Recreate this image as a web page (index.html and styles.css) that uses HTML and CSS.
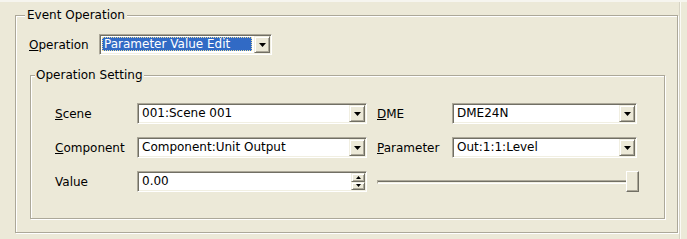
FILE: index.html
```html
<!DOCTYPE html>
<html lang="en">
<head>
    <meta charset="UTF-8">
    <title>Event Operation</title>
    <link rel="stylesheet" href="styles.css">
</head>
<body>

<div class="page">
    <div class="group outer">
        <div class="caption">Event Operation</div>

        <div class="op-row">
            <label class="op-label"><u>O</u>peration</label>
            <div class="combo op-combo">
                <span class="value"><span class="selected">Parameter Value Edit</span></span>
                <span class="drop"><svg width="7" height="4"><path d="M0 0h7L3.5 4z"/></svg></span>
            </div>
        </div>

        <div class="group inner">
            <div class="caption">Operation Setting</div>

            <div class="settings">
                <label><u>S</u>cene</label>
                <div class="combo wide">
                    <span class="value">001:Scene 001</span>
                    <span class="drop"><svg width="7" height="4"><path d="M0 0h7L3.5 4z"/></svg></span>
                </div>
                <label><u>D</u>ME</label>
                <div class="combo narrow">
                    <span class="value">DME24N</span>
                    <span class="drop"><svg width="7" height="4"><path d="M0 0h7L3.5 4z"/></svg></span>
                </div>

                <label><u>C</u>omponent</label>
                <div class="combo wide">
                    <span class="value">Component:Unit Output</span>
                    <span class="drop"><svg width="7" height="4"><path d="M0 0h7L3.5 4z"/></svg></span>
                </div>
                <label><u>P</u>arameter</label>
                <div class="combo narrow">
                    <span class="value">Out:1:1:Level</span>
                    <span class="drop"><svg width="7" height="4"><path d="M0 0h7L3.5 4z"/></svg></span>
                </div>

                <label>Value</label>
                <div class="combo wide">
                    <span class="value">0.00</span>
                    <span class="spin">
                        <span class="spin-btn"><svg width="5" height="3"><path d="M2.5 0L5 3H0z"/></svg></span>
                        <span class="spin-btn"><svg width="5" height="3"><path d="M0 0h5L2.5 3z"/></svg></span>
                    </span>
                </div>
                <div class="slider">
                    <div class="track"></div>
                    <div class="thumb"></div>
                </div>
            </div>
        </div>
    </div>
</div>

</body>
</html>
```

FILE: styles.css
```css
:root {
    --face: #ece9d8;
    --shadow: #aca899;
    --dark: #716f64;
    --light: #f1efe2;
    --select: #316ac5;
}
body {
    margin: 0;
    background-color: var(--face);
    font-family: "DejaVu Sans", sans-serif;
    font-size: 12px;
    color: #000;
}
.page {
    width: 687px;
    height: 239px;
    padding-top: 13px;
    box-sizing: border-box;
    border-top: 2px solid #f6f5ef;
    /* edge of the parent page on the right */
    background: linear-gradient(to right, transparent 679px, #d6d3c4 679px, #d6d3c4 680px, #fbfaf5 680px, #fbfaf5 681px, transparent 681px);
}

/* etched group box */
.group {
    border: 1px solid var(--shadow);
    box-shadow: inset 1px 1px 0 #fff, 1px 1px 0 #fff;
    box-sizing: border-box;
}
.caption {
    width: max-content;
    line-height: 14px;
    margin-top: -8px;
    background-color: var(--face);
}
.outer { margin-left: 15px; width: 663px; height: 218px; }
.outer > .caption { margin-left: 9px; padding: 0 2px; }
.inner { margin: 20px 0 0 14px; width: 635px; height: 144px; }
.inner > .caption { margin-left: 4px; padding: 0 1px; }

.op-row { display: flex; align-items: center; margin-top: 12px; padding-left: 13px; }
.op-label { width: 70px; }

/* combo / edit field */
.combo {
    display: flex;
    height: 21px;
    box-sizing: border-box;
    background-color: #fff;
    border: 1px solid;
    border-color: var(--shadow) #fff #fff var(--shadow);
    box-shadow: inset 1px 1px 0 var(--dark), inset -1px -1px 0 var(--light);
    padding: 1px;
}
.combo .value { flex: 1; line-height: 17px; padding-left: 3px; white-space: nowrap; overflow: hidden; }
.op-combo { width: 173px; }
.op-combo .value { padding: 1px 2px 0 1px; }
.selected {
    display: block;
    height: 14px;
    line-height: 14px;
    padding-left: 2px;
    background-color: var(--select);
    color: #fff;
    outline: 1px dotted #e6dca0;
    outline-offset: -1px;
}
.wide { width: 230px; }
.narrow { width: 185px; }

.drop, .spin-btn {
    display: flex;
    align-items: center;
    justify-content: center;
    box-sizing: border-box;
    background-color: var(--face);
    border: 1px solid;
    border-color: var(--light) var(--dark) var(--dark) var(--light);
    box-shadow: inset 1px 1px 0 #fff, inset -1px -1px 0 var(--shadow);
}
.drop { width: 16px; }
.spin { display: flex; flex-direction: column; width: 14px; }
.spin-btn { flex: 1; }

.settings {
    display: grid;
    grid-template-columns: 82px 240px 75px 185px;
    row-gap: 13px;
    align-items: center;
    margin-top: 21px;
    padding-left: 24px;
}

/* trackbar */
.slider { grid-column: 3 / span 2; position: relative; width: 262px; height: 21px; display: flex; align-items: center; }
.track {
    flex: 1;
    height: 4px;
    box-sizing: border-box;
    border: 1px solid;
    border-color: var(--shadow) #fff #fff var(--shadow);
    background-color: var(--dark);
    box-shadow: inset 0 -1px 0 var(--light);
}
.thumb {
    position: absolute;
    right: 0;
    top: 0;
    width: 13px;
    height: 21px;
    box-sizing: border-box;
    background-color: var(--face);
    border: 1px solid;
    border-color: #fff var(--dark) var(--dark) #fff;
    box-shadow: inset -1px -1px 0 var(--shadow);
}
```
